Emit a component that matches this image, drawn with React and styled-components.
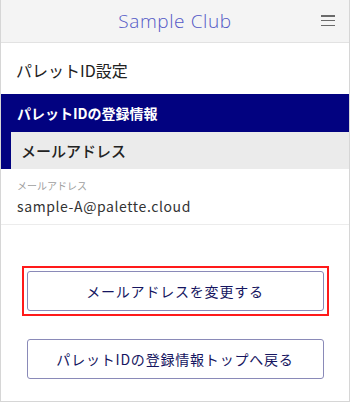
import React from "react";
import styled, { createGlobalStyle } from "styled-components";

const Global = createGlobalStyle`
  html, body { margin: 0; padding: 0; background: #fff; }
  * { box-sizing: border-box; }
  body { font-family: "Noto Sans CJK JP", "Noto Sans", sans-serif; }
`;

const Frame = styled.div`
  width: 350px;
  height: 402px;
  border: 1px solid #d6d6d6;
  border-top: none;
  display: flex;
  flex-direction: column;
  overflow: hidden;
  background: #fff;
`;

const Header = styled.header`
  height: 43px;
  flex: none;
  background: #f4f4f4;
  border-bottom: 1px solid #e2e2e2;
  display: flex;
  align-items: center;
  justify-content: center;
  position: relative;
`;

const Brand = styled.div`
  font-family: "Open Sans", sans-serif;
  font-weight: 300;
  font-size: 19px;
  letter-spacing: 0.6px;
  color: #5358c6;
`;

const Burger = styled.button`
  position: absolute;
  right: 14px;
  top: 15px;
  width: 14px;
  height: 11px;
  padding: 0;
  border: none;
  background: none;
  display: flex;
  flex-direction: column;
  justify-content: space-between;
  span {
    display: block;
    height: 1.5px;
    background: #6a6a6a;
  }
`;

const PageTitle = styled.h1`
  margin: 0;
  height: 51px;
  flex: none;
  display: flex;
  align-items: center;
  padding: 3px 0 0 15px;
  font-size: 16px;
  font-weight: 400;
  color: #222;
`;

const Section = styled.section`
  background: #020280;
  padding-left: 10px;
  flex: none;
`;

const SectionHead = styled.h2`
  margin: 0 0 0 -10px;
  height: 38px;
  display: flex;
  align-items: center;
  padding-left: 16px;
  font-size: 14px;
  font-weight: 700;
  color: #fff;
`;

const SubHead = styled.h3`
  margin: 0;
  height: 37px;
  background: #ebebeb;
  display: flex;
  align-items: center;
  padding-left: 10px;
  font-size: 15px;
  font-weight: 500;
  color: #222;
`;

const Field = styled.div`
  padding: 9px 16px 7px;
  border-bottom: 1px solid #ececec;
  flex: none;
`;

const FieldLabel = styled.div`
  font-size: 10px;
  color: #a0a0a0;
  line-height: 16px;
`;

const FieldValue = styled.div`
  font-size: 14px;
  color: #333;
  letter-spacing: 0.6px;
  line-height: 22px;
  margin-top: 1px;
`;

const Actions = styled.div`
  display: flex;
  flex-direction: column;
  align-items: center;
  gap: 18px;
  padding-top: 41px;
`;

const Highlight = styled.div`
  border: 2px solid ${(p) => (p.$on ? "#ff1a1a" : "transparent")};
  padding: 3px;
`;

const Button = styled.button`
  width: 297px;
  height: 40px;
  border: 1px solid #8a8ab8;
  border-radius: 3px;
  background: #fff;
  font-family: "Noto Sans CJK JP", "Noto Sans", sans-serif;
  font-size: 14px;
  letter-spacing: 0.8px;
  color: #151560;
  display: flex;
  align-items: center;
  justify-content: center;
  padding: 0;
`;

export default function App() {
  return (
    <>
      <Global />
      <Frame>
        <Header>
          <Brand>Sample Club</Brand>
          <Burger aria-label="menu">
            <span />
            <span />
            <span />
          </Burger>
        </Header>
        <PageTitle>パレットID設定</PageTitle>
        <Section>
          <SectionHead>パレットIDの登録情報</SectionHead>
          <SubHead>メールアドレス</SubHead>
        </Section>
        <Field>
          <FieldLabel>メールアドレス</FieldLabel>
          <FieldValue>sample-A@palette.cloud</FieldValue>
        </Field>
        <Actions>
          <Highlight $on>
            <Button>メールアドレスを変更する</Button>
          </Highlight>
          <Highlight>
            <Button>パレットIDの登録情報トップへ戻る</Button>
          </Highlight>
        </Actions>
      </Frame>
    </>
  );
}
